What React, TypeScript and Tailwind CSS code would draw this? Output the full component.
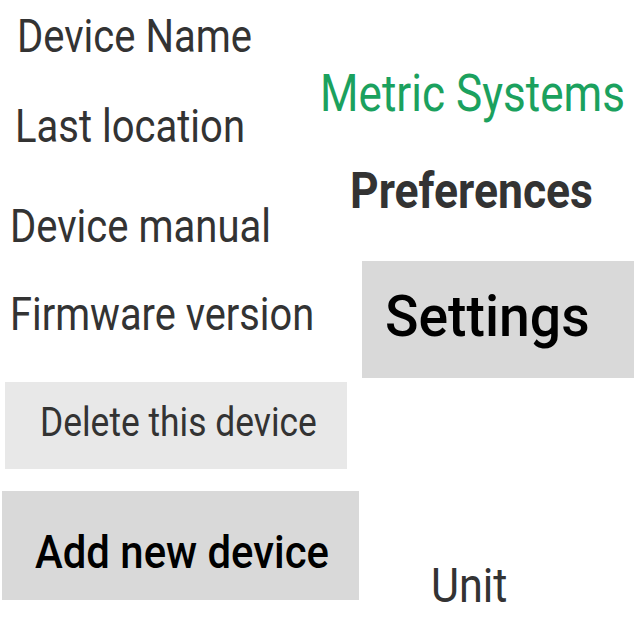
const squeeze = "inline-block origin-left whitespace-nowrap";

export default function App() {
  return (
    <div className="flex w-[640px] h-[640px] overflow-hidden bg-white font-['Roboto',sans-serif] leading-none">
      <div className="flex flex-col items-start w-[320px] shrink-0 text-[#333]">
        <span className={`mt-[13px] ml-[17px] text-[46px] scale-x-[0.87] ${squeeze}`}>Device Name</span>
        <span className={`mt-[44px] ml-[15px] text-[46px] scale-x-[0.87] ${squeeze}`}>Last location</span>
        <span className={`mt-[54px] ml-[10px] text-[46px] scale-x-[0.87] ${squeeze}`}>Device manual</span>
        <span className={`mt-[42px] ml-[10px] text-[46px] scale-x-[0.865] ${squeeze}`}>Firmware version</span>
        <button className="flex items-start mt-[45px] ml-[5px] w-[342px] h-[87px] shrink-0 bg-[#e8e8e8] pl-[35px] pt-[21px] text-left">
          <span className={`text-[40px] scale-x-[0.885] ${squeeze}`}>Delete this device</span>
        </button>
        <button className="flex items-start mt-[22px] ml-[2px] w-[357px] h-[109px] shrink-0 bg-[#d9d9d9] pl-[33px] pt-[38px] text-left text-black font-medium">
          <span className={`text-[46px] scale-x-[0.91] ${squeeze}`}>Add new device</span>
        </button>
      </div>
      <div className="flex flex-col items-start">
        <span className={`mt-[68px] text-[52px] text-[#1ba15e] scale-x-[0.848] ${squeeze}`}>Metric Systems</span>
        <span className={`mt-[46px] ml-[30px] text-[50px] font-bold text-[#333] scale-x-[0.89] ${squeeze}`}>Preferences</span>
        <button className="flex items-start mt-[45px] ml-[42px] w-[272px] h-[117px] shrink-0 bg-[#d9d9d9] pl-[23px] pt-[27px] text-left text-black font-medium">
          <span className={`text-[57px] scale-x-[0.97] ${squeeze}`}>Settings</span>
        </button>
        <span className={`mt-[184px] ml-[111px] text-[48px] text-[#333] scale-x-[0.9] ${squeeze}`}>Unit</span>
      </div>
    </div>
  );
}
